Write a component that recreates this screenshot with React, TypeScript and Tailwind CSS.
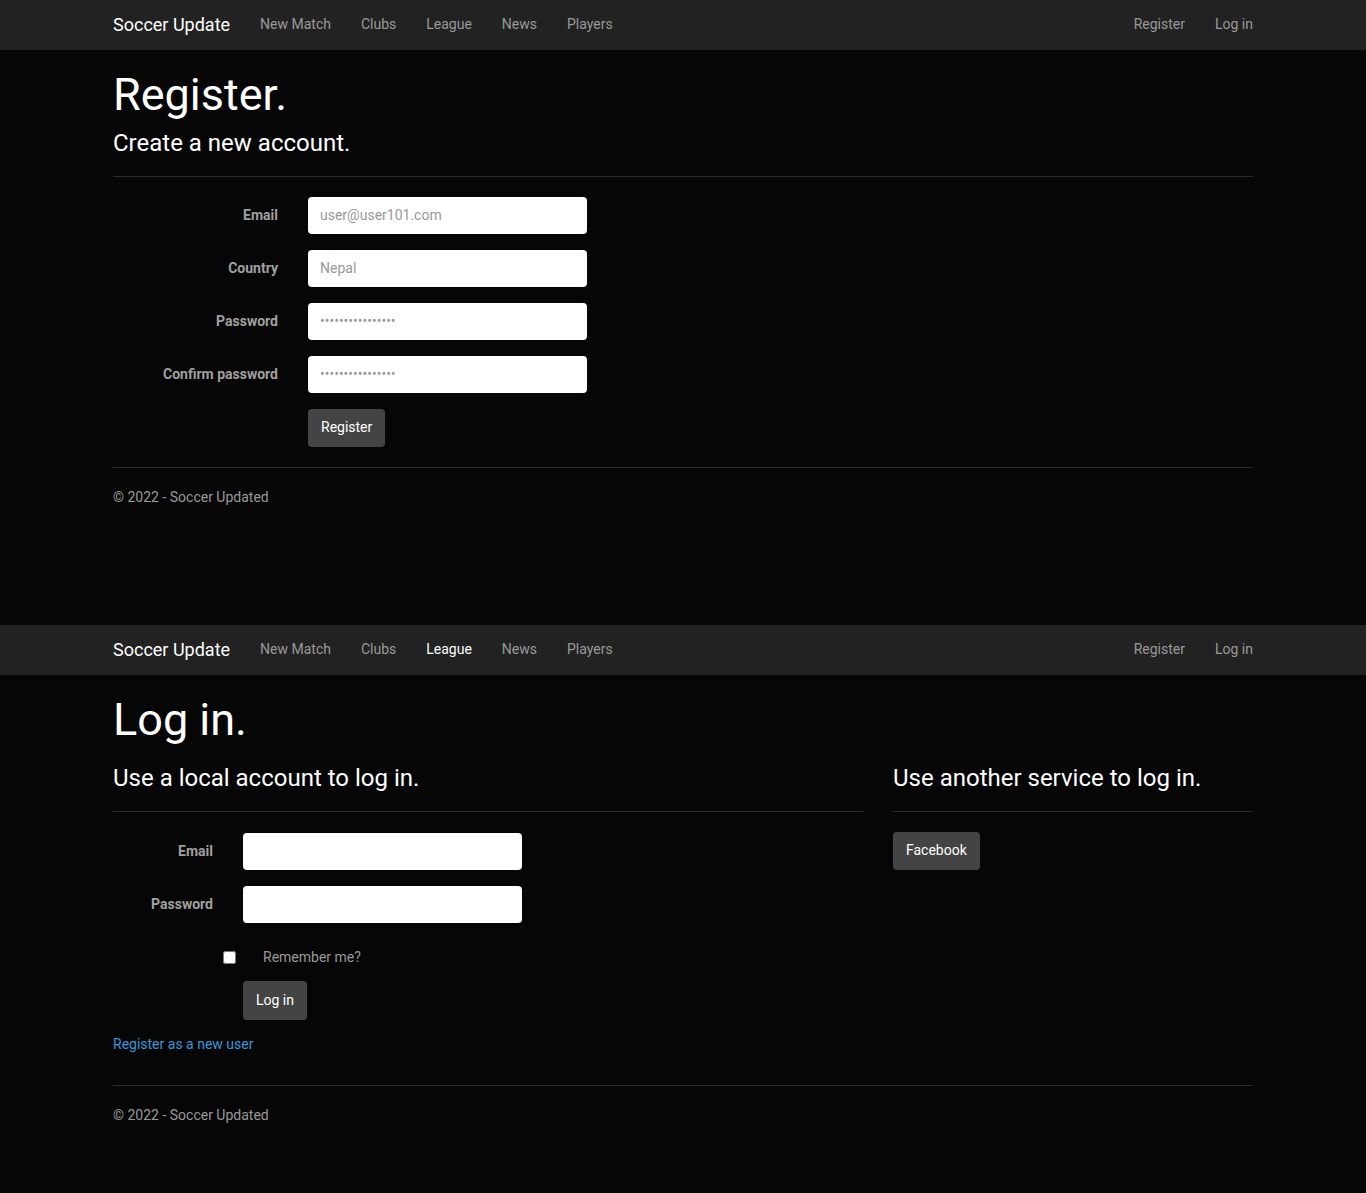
const navLinks = ["New Match", "Clubs", "League", "News", "Players"];

function NavBar({ active }: { active?: string }) {
  return (
    <nav className="h-[50px] bg-[#222222] w-full">
      <div className="w-[1140px] mx-auto h-full flex items-center justify-between pb-[2px]">
        <div className="flex items-center">
          <span className="text-[18px] text-white mr-[15px]">Soccer Update</span>
          {navLinks.map((l) => (
            <a
              key={l}
              className={`text-[14px] px-[15px] ${active === l ? "text-white" : "text-[#999999]"}`}
            >
              {l}
            </a>
          ))}
        </div>
        <div className="flex items-center">
          <a className="text-[14px] text-[#999999] px-[15px]">Register</a>
          <a className="text-[14px] text-[#999999] pl-[15px]">Log in</a>
        </div>
      </div>
    </nav>
  );
}

function Footer({ gap = "mt-5" }: { gap?: string }) {
  return (
    <>
      <hr className={`border-t border-[#2a2a2a] ${gap}`} />
      <footer className="text-[14px] text-[#999999] mt-[19px]">© 2022 - Soccer Updated</footer>
    </>
  );
}

function Field({
  label,
  placeholder,
  type = "text",
  labelW,
}: {
  label: string;
  placeholder?: string;
  type?: string;
  labelW: string;
}) {
  return (
    <div className="flex items-center mb-4">
      <label className={`${labelW} pr-[30px] text-right text-[14px] font-bold text-[#a0a0a0]`}>{label}</label>
      <input
        type={type}
        placeholder={placeholder}
        className="w-[279px] h-[37px] rounded-[4px] bg-white px-3 text-[14px] text-[#222] placeholder:text-[#999999] outline-none"
      />
    </div>
  );
}

function RegisterPage() {
  return (
    <section className="h-[625px] bg-[#060606]">
      <NavBar />
      <div className="w-[1140px] mx-auto">
        <h1 className="text-[45px] leading-[1.1] text-white mt-[20px]">Register.</h1>
        <h4 className="text-[24px] leading-[1.1] text-white mt-[10px]">Create a new account.</h4>
        <hr className="border-t border-[#2a2a2a] mt-5 mb-5" />
        <Field label="Email" placeholder="user@user101.com" labelW="w-[195px]" />
        <Field label="Country" placeholder="Nepal" labelW="w-[195px]" />
        <Field label="Password" placeholder="••••••••••••••••" labelW="w-[195px]" />
        <Field label="Confirm password" placeholder="••••••••••••••••" labelW="w-[195px]" />
        <div className="pl-[195px]">
          <button className="h-[38px] px-[13px] rounded-[4px] bg-[#444444] text-white text-[14px]">Register</button>
        </div>
        <Footer />
      </div>
    </section>
  );
}

function LoginPage() {
  return (
    <section className="bg-[#060606] min-h-[568px] pb-10">
      <NavBar active="League" />
      <div className="w-[1140px] mx-auto">
        <h1 className="text-[45px] leading-[1.1] text-white mt-[20px]">Log in.</h1>
        <div className="grid grid-cols-[750px_360px] gap-x-[30px]">
          <div>
            <h4 className="text-[24px] leading-[1.1] text-white mt-[20px]">Use a local account to log in.</h4>
            <hr className="border-t border-[#2a2a2a] mt-5 mb-[21px]" />
            <Field label="Email" labelW="w-[130px]" />
            <Field label="Password" type="password" labelW="w-[130px]" />
            <div className="flex items-center h-[38px] mb-[4px] pl-[110px]">
              <input type="checkbox" className="w-[13px] h-[13px]" />
              <span className="ml-[27px] text-[14px] text-[#999999]">Remember me?</span>
            </div>
            <div className="pl-[130px]">
              <button className="h-[39px] px-[13px] rounded-[4px] bg-[#444444] text-white text-[14px]">Log in</button>
            </div>
            <a className="block mt-[14px] text-[14px] text-[#3498db]">Register as a new user</a>
          </div>
          <div>
            <h4 className="text-[24px] leading-[1.1] text-white mt-[20px]">Use another service to log in.</h4>
            <hr className="border-t border-[#2a2a2a] mt-5 mb-5" />
            <button className="h-[38px] px-[13px] rounded-[4px] bg-[#444444] text-white text-[14px]">Facebook</button>
          </div>
        </div>
        <Footer gap="mt-[30px]" />
      </div>
    </section>
  );
}

export default function App() {
  return (
    <div className="font-['Roboto',sans-serif] bg-[#060606]">
      <RegisterPage />
      <LoginPage />
    </div>
  );
}
